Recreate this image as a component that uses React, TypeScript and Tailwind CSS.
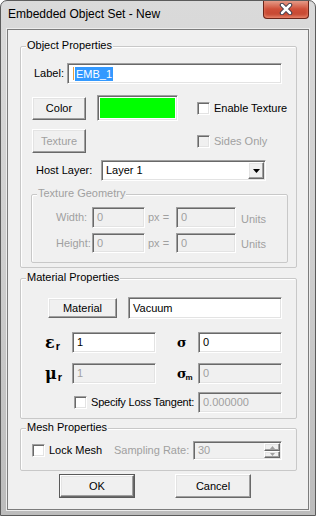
const sunken =
  "border border-t-[#a0a0a0] border-l-[#a0a0a0] border-r-white border-b-white shadow-[inset_1px_1px_0_#696969,inset_-1px_-1px_0_#e3e3e3]";
const raised =
  "border border-t-white border-l-white border-r-[#696969] border-b-[#696969] shadow-[inset_-1px_-1px_0_#a0a0a0,inset_1px_1px_0_#e3e3e3] bg-[#f0f0f0]";

function Btn({ label, size, disabled }: { label: string; size: string; disabled?: boolean }) {
  return (
    <div className={`${raised} ${size} flex items-center justify-center ${disabled ? "text-[#a0a0a0]" : "text-black"}`}>
      {label}
    </div>
  );
}

function Field({ value, size, disabled, children }: { value?: string; size: string; disabled?: boolean; children?: React.ReactNode }) {
  return (
    <div className={`${sunken} ${size} shrink-0 flex items-center pl-[4px] ${disabled ? "bg-[#f0f0f0] text-[#a0a0a0]" : "bg-white text-black"}`}>
      <span className="flex-1">{value}</span>
      {children}
    </div>
  );
}

function Check({ disabled }: { disabled?: boolean }) {
  return <div className={`${sunken} w-[13px] h-[13px] shrink-0 ${disabled ? "bg-[#f0f0f0]" : "bg-white"}`} />;
}

function Group({ title, size, disabled, children }: { title: string; size: string; disabled?: boolean; children: React.ReactNode }) {
  return (
    <div className={`relative flex flex-col border border-[#c8c8c8] rounded-[2px] shadow-[inset_1px_1px_0_#ffffff] ${size}`}>
      <span className={`absolute -top-[8px] left-[5px] px-[1px] bg-[#f0f0f0] leading-[13px] ${disabled ? "text-[#a0a0a0]" : "text-black"}`}>
        {title}
      </span>
      {children}
    </div>
  );
}

function Sym({ main, sub, big, small }: { main: string; sub: string; big?: boolean; small?: boolean }) {
  return (
    <span className="font-bold text-black leading-none whitespace-nowrap">
      <span className={`font-['DejaVu_Serif',serif] ${big ? "text-[16px]" : "text-[13px]"}`}>{main}</span>
      <sub className={`font-['Liberation_Sans',sans-serif] ${small ? "text-[8px] -ml-[1px]" : "text-[11px] ml-[1px]"}`}>{sub}</sub>
    </span>
  );
}

export default function App() {
  return (
    <div className="w-[316px] h-[516px] relative flex flex-col border border-[#5b5b5b] rounded-t-[7px] bg-linear-to-b from-[#dadada] via-[#cecece] to-[#bcbcbc] font-['Liberation_Sans',Arial,sans-serif] text-[11px] leading-[13px] text-black overflow-hidden">
      {/* title bar */}
      <div className="h-[28px] flex items-center pl-[7px] pb-[1px] text-[12px] text-black">
        Embedded Object Set - New
      </div>
      <div className="absolute -top-px right-[6px] w-[46px] h-[19px] rounded-b-[4px] border border-t-0 border-[#6b261a] bg-linear-to-b from-[#e6a391] via-[#cf4f39] to-[#c0442c] shadow-[inset_0_-2px_3px_#e7836a] flex items-center justify-center">
        <svg width="14" height="12" viewBox="0 0 14 12">
          <path d="M3 2 L11 10 M11 2 L3 10" stroke="#3b3b4a" strokeWidth="4.5" strokeLinecap="round" />
          <path d="M3 2 L11 10 M11 2 L3 10" stroke="#ffffff" strokeWidth="2.5" strokeLinecap="round" />
        </svg>
      </div>

      {/* client area */}
      <div className="ml-[6px] w-[302px] h-[481px] border border-[#7c7c7c] bg-[#f0f0f0] shadow-[0_0_0_1px_#ececec] flex flex-col">
        <div className="mt-[16px] ml-[12px]">
          <Group title="Object Properties" size="w-[277px] h-[222px]">
            <div className="mt-[16px] pl-[13px] flex items-center h-[21px]">
              <span className="w-[33px]">Label:</span>
              <Field size="w-[215px] h-[21px]" />
            </div>
            <div className="-mt-[21px] ml-[51px] h-[21px] flex items-center pl-[1px]">
              <span className="w-[1px] h-[13px] bg-[#e8a040] mr-[1px]" />
              <span className="bg-[#3399ff] text-white px-[1px] leading-[14px]">EMB_1</span>
            </div>
            <div className="mt-[11px] pl-[11px] flex items-center h-[26px]">
              <Btn label="Color" size="w-[54px] h-[23px]" />
              <div className={`${sunken} ml-[11px] w-[81px] h-[26px] p-[2px] bg-white`}>
                <div className="w-full h-full bg-[#00ff00]" />
              </div>
              <div className="ml-[19px]"><Check /></div>
              <span className="ml-[4px]">Enable Texture</span>
            </div>
            <div className="mt-[8px] pl-[11px] flex items-center h-[24px]">
              <Btn label="Texture" size="w-[54px] h-[24px]" disabled />
              <div className="ml-[111px]"><Check disabled /></div>
              <span className="ml-[4px] text-[#a0a0a0]">Sides Only</span>
            </div>
            <div className="mt-[7px] pl-[15px] flex items-center h-[21px]">
              <span className="w-[65px]">Host Layer:</span>
              <Field value="Layer 1" size="w-[165px] h-[21px]">
                <div className={`${raised} w-[16px] h-[17px] m-[1px] flex items-center justify-center`}>
                  <svg width="7" height="4" viewBox="0 0 7 4"><polygon points="0,0 7,0 3.5,4" fill="#000" /></svg>
                </div>
              </Field>
            </div>
            <div className="mt-[13px] ml-[10px]">
              <Group title="Texture Geometry" size="w-[257px] h-[69px]" disabled>
                <div className="mt-[12px] pl-[24px] flex items-center h-[21px] text-[#a0a0a0]">
                  <span className="w-[36px]">Width:</span>
                  <Field value="0" size="w-[53px] h-[21px]" disabled />
                  <span className="w-[31px] pl-[3px]">px =</span>
                  <Field value="0" size="w-[60px] h-[21px]" disabled />
                  <span className="ml-[5px] pt-[3px]">Units</span>
                </div>
                <div className="mt-[5px] pl-[24px] flex items-center h-[20px] text-[#a0a0a0]">
                  <span className="w-[36px]">Height:</span>
                  <Field value="0" size="w-[53px] h-[20px]" disabled />
                  <span className="w-[31px] pl-[3px]">px =</span>
                  <Field value="0" size="w-[60px] h-[20px]" disabled />
                  <span className="ml-[5px] pt-[3px]">Units</span>
                </div>
              </Group>
            </div>
          </Group>
        </div>

        <div className="mt-[10px] ml-[12px]">
          <Group title="Material Properties" size="w-[277px] h-[141px]">
            <div className="mt-[18px] pl-[27px] flex items-center h-[22px]">
              <Btn label="Material" size="w-[69px] h-[20px]" />
              <div className="ml-[11px]">
                <Field value="Vacuum" size="w-[154px] h-[22px]" />
              </div>
            </div>
            <div className="mt-[13px] pl-[24px] flex items-center h-[21px]">
              <span className="w-[27px]"><Sym main="ε" sub="r" big /></span>
              <Field value="1" size="w-[84px] h-[21px]" />
              <span className="w-[42px] pl-[21px]"><Sym main="σ" sub="" /></span>
              <Field value="0" size="w-[84px] h-[21px]" />
            </div>
            <div className="mt-[10px] pl-[24px] flex items-center h-[21px]">
              <span className="w-[27px]"><Sym main="μ" sub="r" big /></span>
              <Field value="1" size="w-[84px] h-[21px]" disabled />
              <span className="w-[42px] pl-[21px]"><Sym main="σ" sub="m" small /></span>
              <Field value="0" size="w-[84px] h-[21px]" disabled />
            </div>
            <div className="mt-[8px] pl-[53px] flex items-center h-[21px]">
              <Check />
              <span className="ml-[4px] w-[107px] whitespace-nowrap tracking-[-0.2px]">Specify Loss Tangent:</span>
              <Field value="0.000000" size="w-[84px] h-[21px]" disabled />
            </div>
          </Group>
        </div>

        <div className="mt-[9px] ml-[12px]">
          <Group title="Mesh Properties" size="w-[277px] h-[43px]">
            <div className="mt-[12px] pl-[11px] flex items-center h-[19px]">
              <div className="w-[82px] flex items-center">
                <Check />
                <span className="ml-[4px]">Lock Mesh</span>
              </div>
              <span className="w-[79px] text-[#a0a0a0]">Sampling Rate:</span>
              <Field value="30" size="w-[89px] h-[19px]" disabled>
                <div className="flex flex-col m-[1px]">
                  <div className={`${raised} w-[16px] h-[8px] flex items-center justify-center`}>
                    <svg width="5" height="3" viewBox="0 0 5 3"><polygon points="2.5,0 5,3 0,3" fill="#a0a0a0" /></svg>
                  </div>
                  <div className={`${raised} w-[16px] h-[7px] flex items-center justify-center`}>
                    <svg width="5" height="3" viewBox="0 0 5 3"><polygon points="0,0 5,0 2.5,3" fill="#a0a0a0" /></svg>
                  </div>
                </div>
              </Field>
            </div>
          </Group>
        </div>

        <div className="mt-[3px] ml-[51px] flex">
          <div className="border border-[#5a5a5a]">
            <Btn label="OK" size="w-[74px] h-[22px]" />
          </div>
          <div className="ml-[40px]">
            <Btn label="Cancel" size="w-[76px] h-[24px]" />
          </div>
        </div>
      </div>
    </div>
  );
}
